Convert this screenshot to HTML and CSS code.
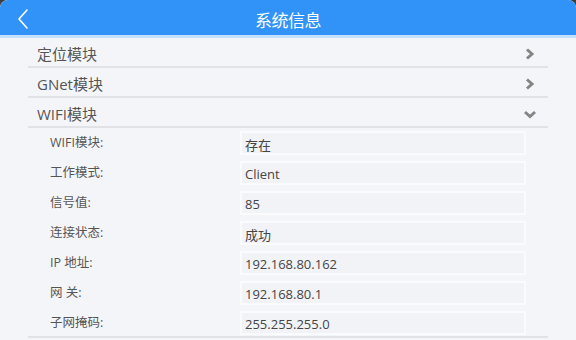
FILE: index.html
```html
<!DOCTYPE html>
<html lang="zh-CN">
<head>
<meta charset="utf-8">
<title>系统信息</title>
<link rel="stylesheet" href="styles.css">
</head>
<body>
<div class="app">
  <header class="header">
    <div class="back">
      <svg width="12" height="20" viewBox="0 0 12 20"><polyline points="10,1 2,10 10,19" fill="none" stroke="#fff" stroke-width="1.6" stroke-linecap="round" stroke-linejoin="round"/></svg>
    </div>
    <h1 class="title">系统信息</h1>
    <div></div>
  </header>
  <div class="list">
    <div class="section">
      <span class="section-name">定位模块</span>
      <svg class="chev" width="12" height="12" viewBox="0 0 12 12"><polyline points="3,1.5 8,6 3,10.5" fill="none" stroke="#858585" stroke-width="3"/></svg>
    </div>
    <div class="section">
      <span class="section-name">GNet模块</span>
      <svg class="chev" width="12" height="12" viewBox="0 0 12 12"><polyline points="3,1.5 8,6 3,10.5" fill="none" stroke="#858585" stroke-width="3"/></svg>
    </div>
    <div class="section">
      <span class="section-name">WIFI模块</span>
      <svg class="chev" width="12" height="12" viewBox="0 0 12 12"><polyline points="1,4 6,8.5 11,4" fill="none" stroke="#858585" stroke-width="3"/></svg>
    </div>
    <div class="details">
      <div class="row"><span class="label">WIFI模块:</span><span class="value">存在</span></div>
      <div class="row"><span class="label">工作模式:</span><span class="value">Client</span></div>
      <div class="row"><span class="label">信号值:</span><span class="value">85</span></div>
      <div class="row"><span class="label">连接状态:</span><span class="value">成功</span></div>
      <div class="row"><span class="label">IP 地址:</span><span class="value">192.168.80.162</span></div>
      <div class="row"><span class="label">网 关:</span><span class="value">192.168.80.1</span></div>
      <div class="row"><span class="label">子网掩码:</span><span class="value">255.255.255.0</span></div>
    </div>
  </div>
</div>
</body>
</html>
```

FILE: styles.css
```css
html, body {
  margin: 0;
  padding: 0;
  background: #3b3d40;
}
body {
  font-family: "Open Sans", "Noto Sans CJK SC", sans-serif;
}
.app {
  width: 576px;
  height: 340px;
  background: #f4f5f9;
  border-radius: 8px 8px 0 0;
  overflow: hidden;
}
.header {
  height: 35px;
  background: #3193f7;
  border-bottom: 3px solid #c4e0fb;
  display: grid;
  grid-template-columns: 1fr auto 1fr;
  align-items: center;
}
.back {
  padding-left: 17px;
  padding-top: 3px;
  display: flex;
  align-items: center;
}
.title {
  margin: 0;
  padding-top: 3px;
  color: #fff;
  font-size: 17px;
  font-weight: normal;
  font-family: "Noto Sans CJK SC", sans-serif;
  letter-spacing: -0.5px;
}
.list {
  padding: 0 28px;
}
.section {
  height: 28px;
  border-bottom: 2px solid #e1e2e6;
  display: flex;
  align-items: center;
  justify-content: space-between;
  padding: 0 12px 0 9px;
}
.section-name {
  font-size: 15px;
  color: #555;
  padding-top: 3px;
}
.chev {
  margin-top: 4px;
}
.details {
  padding: 3px 0 1px 22px;
  border-bottom: 2px solid #e1e2e6;
  display: flex;
  flex-direction: column;
  gap: 6px;
}
.row {
  display: grid;
  grid-template-columns: 190px 286px;
  align-items: center;
  height: 24px;
}
.label {
  font-size: 12.5px;
  color: #555;
  padding-bottom: 4px;
}
.value {
  box-sizing: border-box;
  height: 24px;
  background: #f2f3f7;
  border: 2px solid #fafbfd;
  font-size: 13px;
  color: #454545;
  padding-left: 3px;
  display: flex;
  align-items: center;
  padding-top: 2px;
}
```
